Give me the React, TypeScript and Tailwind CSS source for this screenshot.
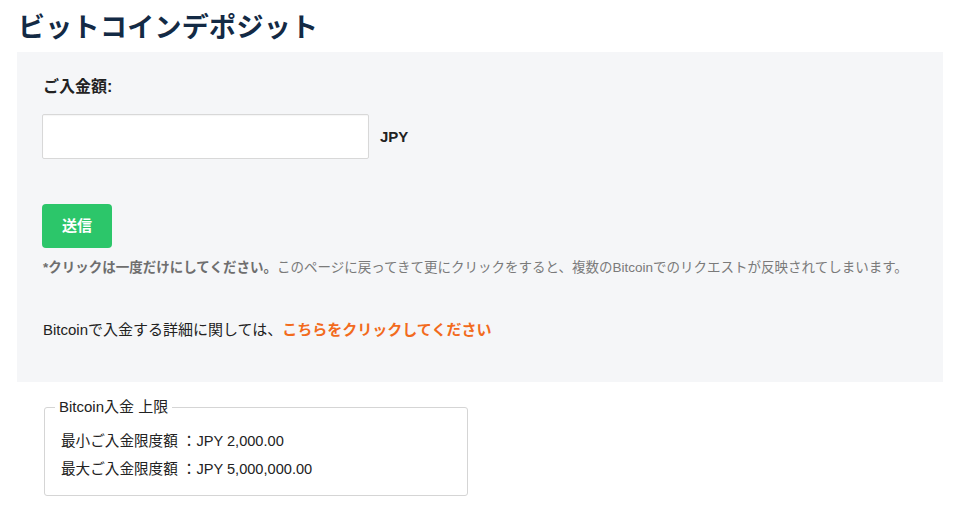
import React from "react";

const font = { fontFamily: '"Liberation Sans", "Noto Sans CJK JP", sans-serif' };

export default function App() {
  return (
    <div className="w-[960px] h-[523px] bg-white px-[17px] text-[#222]" style={font}>
      <h1 className="pt-[10px] mb-[6px] leading-[36px] text-[27px] font-bold text-[#132a45] pl-[1px] tracking-[0.3px]">
        ビットコインデポジット
      </h1>
      <div className="w-[926px] bg-[#f5f6f8] pl-[26px] pt-[25px] pb-[42px]">
        <div className="leading-[20px] text-[16px] font-bold text-[#222]">ご入金額:</div>
        <div className="mt-[17px] flex items-center">
          <input
            className="w-[327px] h-[45px] -ml-[1px] bg-white border border-[#d8d8d8] rounded-[2px] shadow-[inset_0_1px_1px_rgba(0,0,0,0.04)] outline-none"
            type="text"
          />
          <span className="ml-[11px] text-[15px] font-bold text-[#222] leading-[20px]">JPY</span>
        </div>
        <button className="mt-[45px] -ml-[1px] w-[70px] h-[44px] rounded-[4px] bg-[#2cc66a] text-white text-[15px] font-bold flex items-center justify-center">
          送信
        </button>
        <p className="mt-[11px] leading-[18px] text-[13.5px] text-[#7a7a7a] whitespace-nowrap">
          <span className="font-bold text-[#6e6e6e]">*クリックは一度だけにしてください。</span>
          このページに戻ってきて更にクリックをすると、複数のBitcoinでのリクエストが反映されてしまいます。
        </p>
        <p className="mt-[43px] leading-[20px] text-[15px] text-[#222]">
          Bitcoinで入金する詳細に関しては、
          <a className="font-bold text-[#f26b1d]">こちらをクリックしてください</a>
        </p>
      </div>
      <fieldset className="mt-[16px] ml-[27px] w-[424px] border border-[#d5d5d5] rounded-[3px] pl-[11px] pb-[16px]">
        <legend className="px-[4px] text-[15px] leading-[18px] text-[#222] -ml-[1px]">Bitcoin入金 上限</legend>
        <div className="pl-[5px] pt-[15px] text-[14.6px] leading-[20px] text-[#222] flex flex-col gap-[8px]">
          <div>最小ご入金限度額 ：JPY 2,000.00</div>
          <div>最大ご入金限度額 ：JPY 5,000,000.00</div>
        </div>
      </fieldset>
    </div>
  );
}
